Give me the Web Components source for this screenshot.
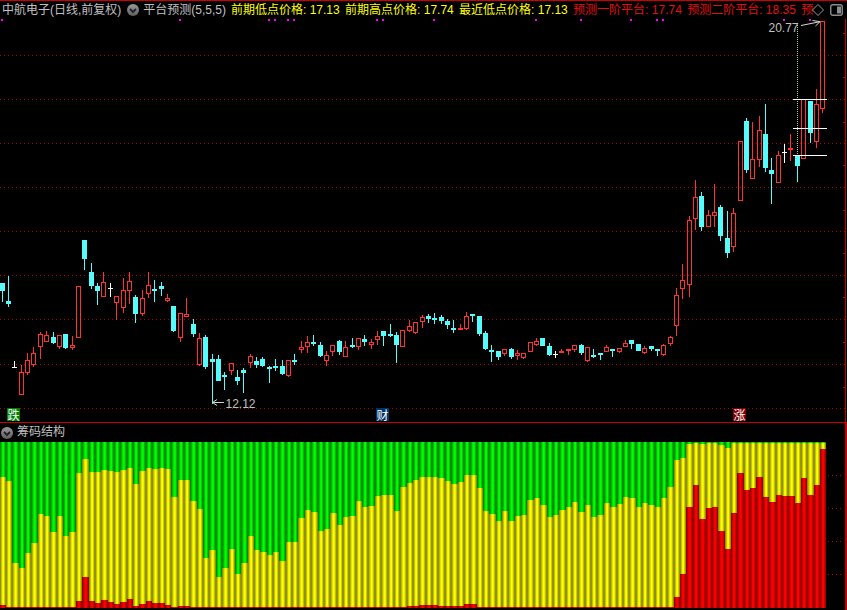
<!DOCTYPE html>
<html lang="zh">
<head>
<meta charset="utf-8">
<title>中航电子</title>
<style>
html,body{margin:0;padding:0;background:#000;}
</style>
</head>
<body>
<trade-terminal>
  <chart-header slot="header">
    <legend-item color="#c0c0c0">中航电子(日线,前复权)</legend-item>
    <round-chevron slot="after-title"></round-chevron>
    <legend-item color="#c0c0c0" slot="indicator">平台预测(5,5,5)</legend-item>
    <legend-item color="#ffff00" slot="values">前期低点价格: 17.13</legend-item>
    <legend-item color="#ffff00" slot="values">前期高点价格: 17.74</legend-item>
    <legend-item color="#ffff00" slot="values">最近低点价格: 17.13</legend-item>
    <legend-item color="#e01010" slot="values">预测一阶平台: 17.74</legend-item>
    <legend-item color="#e01010" slot="values">预测二阶平台: 18.35</legend-item>
    <legend-item color="#e01010" slot="values">预</legend-item>
  </chart-header>
  <candle-chart slot="main">
    <signal-badge style="left:7px;bottom:1px" bg="#008000">跌</signal-badge>
    <signal-badge style="left:376px;bottom:1px" bg="#003466">财</signal-badge>
    <signal-badge style="left:733px;bottom:1px" bg="#800000">涨</signal-badge>
  </candle-chart>
  <chip-panel slot="lower">
    <round-chevron slot="icon"></round-chevron>
    筹码结构
  </chip-panel>
</trade-terminal>

<script>
const FONT = '"Liberation Sans","Noto Sans CJK SC",sans-serif';
const cx = i => 2.19 + 6.361 * i;

class TradeTerminal extends HTMLElement {
  constructor(){
    super();
    this.attachShadow({mode:'open'}).innerHTML = `
      <style>
        :host{display:flex;flex-direction:column;width:847px;height:610px;background:#000;overflow:hidden;font:12px ${FONT};}
      </style>
      <slot name="header"></slot><slot name="main"></slot><slot name="lower"></slot>`;
  }
}
class ChartHeader extends HTMLElement {
  constructor(){
    super();
    this.attachShadow({mode:'open'}).innerHTML = `
      <style>
        :host{display:flex;align-items:center;height:18px;border-top:1px solid #d00000;padding-left:2px;white-space:nowrap;flex:none;}
        .values{display:flex;gap:5.33px;margin-left:5px;}
        .chev{display:flex;margin:0 4px 0 6px;}
        .end{display:flex;align-items:center;margin-left:-1px;}
        .end svg{display:block;flex:none;}
        .toggle{margin-left:6px;}
      </style>
      <slot></slot>
      <span class="chev"><slot name="after-title"></slot></span>
      <slot name="indicator"></slot>
      <span class="values"><slot name="values"></slot></span>
      <span class="end">
        <svg width="12" height="12" viewBox="0 0 12 12"><path d="M6 .5 11.5 6 6 11.5 .5 6Z" fill="none" stroke="#9a9a9a"/></svg>
        <svg class="toggle" width="13" height="12" viewBox="0 0 13 12"><rect x=".75" y=".75" width="11.5" height="10.5" rx="2" fill="none" stroke="#8c8c8c" stroke-width="1.4"/><rect x="7" y="2.5" width="4" height="7" fill="#8c8c8c"/></svg>
      </span>`;
  }
}
class LegendItem extends HTMLElement {
  constructor(){
    super();
    this.attachShadow({mode:'open'}).innerHTML = `<style>:host{display:block;font:12px/18px ${FONT};white-space:nowrap;color:var(--c,#c0c0c0);}</style><slot></slot>`;
  }
  connectedCallback(){ this.style.setProperty('--c', this.getAttribute('color')); }
}
class RoundChevron extends HTMLElement {
  constructor(){
    super();
    this.attachShadow({mode:'open'}).innerHTML = `
      <style>:host{display:block;width:12px;height:12px;flex:none;}svg{display:block;}</style>
      <svg width="12" height="12" viewBox="0 0 12 12">
        <defs><linearGradient id="g" x1="0" y1="0" x2="0" y2="1"><stop offset="0" stop-color="#9a9a9a"/><stop offset="1" stop-color="#5e5e5e"/></linearGradient></defs>
        <circle cx="6" cy="6" r="6" fill="url(#g)"/>
        <path d="M3 5 6 8 9 5" fill="none" stroke="#202020" stroke-width="1.8"/>
      </svg>`;
  }
}
class SignalBadge extends HTMLElement {
  constructor(){
    super();
    this.attachShadow({mode:'open'}).innerHTML = `<style>:host{position:absolute;display:block;width:13px;height:13px;font:12px/13px "Noto Sans CJK SC",sans-serif;color:#fff;text-align:center;background:var(--b);}</style><slot></slot>`;
  }
  connectedCallback(){ this.style.setProperty('--b', this.getAttribute('bg')); }
}

/* type, wick top, body top, body bottom, wick bottom — sampled in 3x crop units */
const SETS = [
 [230,'c,159,159,183,216 c,138,213,222,231 w,392,411,411,414 r,405,427,494,494 r,369,391,429,435 r,351,370,405,411 r,306,313,350,387 r,303,316,335,335 c,306,321,339,342 r,316,316,350,357 c,312,312,354,357 r,318,346,353,360 r,169,169,323,323 c,30,30,87,120 c,99,126,168,177 c,159,168,183,225 r,126,157,200,201 w,159,174,174,201 r,199,199,218,270 r,144,181,233,249 r,126,154,182,222 c,195,201,252,279 r,180,205,251,258 r,126,166,191,204 c,150,177,183,216 c,156,168,177,198 r,192,205,213,216 c,228,228,303,306 r,250,250,323,336 r,204,253,260,260 c,267,282,312,321 r,309,325,404,408 c,315,321,411,417 c,372,387,396,522 c,375,387,453,453 c,426,434,437,480 r,400,400,422,435 c,420,441,453,465 c,414,420,429,489 r,372,379,398,414 c,381,393,405,414 c,381,388,408,411 c,408,411,414,459 c,387,408,411,423'],
 [300,'c,180,198,222,225 r,181,181,228,231 c,162,180,181,195 r,123,142,149,159 r,108,127,142,159 c,105,127,131,138 c,126,136,168,171 r,153,166,182,198 r,136,136,155,168 c,120,124,156,165 r,123,142,170,171 c,114,136,140,144 r,115,115,142,150 c,105,118,125,138 r,117,127,136,147 r,93,109,119,135 c,94,94,108,138 c,72,103,106,111 c,96,106,136,189 r,91,91,140,140 r,60,79,92,96 r,67,67,98,102 r,45,52,67,84 c,42,48,56,69 c,39,54,56,72 c,45,52,63,72 c,57,63,75,87 c,60,85,87,99 r,72,85,86,87 r,36,49,86,90 c,42,42,46,66 c,48,48,102,108 c,93,99,147,150 c,135,151,152,186 c,153,153,171,180 r,148,148,162,168 c,145,148,171,177 r,150,160,167,180 r,160,160,174,177 r,127,127,157,157 r,114,124,135,138 c,114,114,138,138 c,129,138,165,168 w,153,162,163,174'],
 [300,'r,147,153,154,160 r,147,147,149,165 r,136,136,149,156 c,132,135,160,165 r,142,142,183,186 c,147,166,171,174 c,160,160,163,180 r,136,142,155,155 c,148,148,150,171 r,145,145,155,159 r,120,130,140,140 c,121,121,132,147 c,132,132,153,153 r,138,145,159,162 c,139,139,147,153 c,148,148,151,168 r,132,136,165,168 r,108,112,131,138'],
 [10,'r,835,856,947,977 r,763,811,836,866 r,618,631,826,860 r,510,562,626,660 c,546,559,651,663 r,600,616,650,650 r,522,607,617,651 c,585,591,678,693 c,603,685,729,744 r,594,610,710,726 r,394,394,572,572 c,324,333,480,489 r,336,448,506,506 r,318,361,449,471 c,282,372,473,486 c,444,480,492,582 r,423,436,518,518 w,402,427,428,459 r,372,415,416,453 c,436,436,468,516 r,268,268,446,446 c,273,273,369,399 r,237,283,395,414 r,34,34,296,309']
];
const CANDLES = SETS.flatMap(([off,s]) => s.split(' ').map(row => {
  const p = row.split(',');
  const v = p.slice(1).map(n => Math.round(off + n/3));
  return {t:p[0], hi:v[0], top:v[1], bot:v[2], lo:v[3]};
}));

class CandleChart extends HTMLElement {
  constructor(){
    super();
    const COL = {r:'#ff3232', c:'#54fcfc', w:'#ffffff'};
    let s = '';
    for (const y of [55,99,143,187,231,275,319,364,408])
      s += `<path d="M0 ${y+.5}H845" stroke="#b00000" stroke-dasharray="1 3"/>`;
    s += `<path d="M845.5 19V422" stroke="#c00000"/>`;
    for (const y of [33,77,122,165,210,253,297,342,387])
      s += `<path d="M843 ${y+.5}H845" stroke="#c00000"/>`;
    for (const x of [2,180,269,275,288,294,377,383,434,536,581,631,657,663,784,810])
      s += `<rect x="${x-1}" y="19" width="2" height="2" fill="#ff00ff"/>`;
    s += `<path d="M797.5 23V182" stroke="#90d890" stroke-dasharray="1 1"/>`;
    CANDLES.forEach((k,i) => {
      const p = Math.floor(cx(i)), c = COL[k.t], w = p + .5;
      if (k.hi < k.top) s += `<path d="M${w} ${k.hi}V${k.top}" stroke="${c}"/>`;
      if (k.lo > k.bot) s += `<path d="M${w} ${k.bot}V${k.lo}" stroke="${c}"/>`;
      const h = Math.max(k.bot - k.top, 1);
      if (k.t === 'c') s += `<rect x="${p-2}" y="${k.top}" width="5" height="${Math.max(h,2)}" fill="${c}"/>`;
      else if (k.t === 'w') s += `<rect x="${p-2}" y="${k.top}" width="5" height="1" fill="${c}"/>`;
      else if (h <= 1) s += `<rect x="${p-2}" y="${k.top}" width="5" height="2" fill="${c}"/>`;
      else s += `<path d="M${p-2} ${k.top}h5v${h}h-5zM${p-1} ${k.top+1}v${h-2}h3v${-(h-2)}z" fill="${c}" fill-rule="evenodd"/>`;
    });
    for (const y of [99,128,155])
      s += `<path d="M793 ${y+.5}H827" stroke="#fff"/>`;
    this.attachShadow({mode:'open'}).innerHTML = `
      <style>
        :host{display:block;position:relative;flex:none;height:403px;}
        svg{display:block;}
        text{font:12px "Liberation Sans",sans-serif;fill:#c0c0c0;}
        .s{shape-rendering:crispEdges;}
      </style>
      <svg width="847" height="403" viewBox="0 19 847 403">
        <g class="s">${s}</g>
        <text x="768.5" y="32">20.77</text>
        <path d="M801 25.5 819.5 21.8M812.5 20.5 820 21.7 815.5 26" fill="none" stroke="#d8d8d8"/>
        <text x="225.5" y="408">12.12</text>
        <path d="M224 402.5H213M217 399.5 212.5 402.5 217 405.5" fill="none" stroke="#d0d0d0"/>
      </svg>
      <slot></slot>`;
  }
}

const yellowTop = [171,183,429,444,399,369,282,288,336,288,348,336,159,117,156,156,150,153,156,150,144,192,153,144,147,144,147,231,180,180,243,267,414,390,471,444,387,462,429,348,390,396,405,396,
 423,366,366,294,270,276,333,327,279,315,291,288,243,261,258,228,225,225,273,201,189,180,171,171,171,174,183,192,186,165,165,204,273,282,303,273,303,288,285,240,234,255,291,285,270,
 261,246,276,255,291,285,249,261,252,231,234,261,249,255,261,234,201,120,114,72,69,72,69,69,75,84,69,69,69,69,69,69,69,69,69,69,69,69,69,69,69].map(v=>Math.round(420+v/3));
const redTop = new Array(130).fill(607);
const RED = {0:555,12:543,13:471,14:543,15:549,16:540,17:546,18:552,19:546,20:537,21:558,22:552,23:543,24:549,25:549,26:555,28:558,29:558,
 64:558,65:558,66:555,67:555,68:555,69:558,70:558,71:558,72:558,73:552,74:552,
 106:531,107:462,108:261,109:195,110:297,111:264,112:261,113:333,114:387,115:279,116:159,117:210,118:204,119:171,120:231,121:246,122:225,123:228,124:228,125:249,126:174,127:225,128:195,129:87};
for (const k in RED) redTop[k] = Math.round(420 + RED[k]/3);

class ChipBars extends HTMLElement {
  constructor(){
    super();
    const TOP = 442, BOT = 608;
    let s = '';
    for (let i = 0; i < 130; i++) {
      const l = Math.max(0, Math.round(cx(i) + .5 - 3.18)), r = Math.round(cx(i) + .5 + 3.18), w = r - l;
      const y = yellowTop[i], d = redTop[i];
      s += `<rect x="${l}" y="${TOP}" width="${w}" height="${y-TOP}" fill="url(#gg)"/>`;
      s += `<rect x="${l}" y="${y}" width="${w}" height="${d-y}" fill="url(#gy)"/>`;
      s += `<rect x="${l}" y="${d}" width="${w}" height="${BOT-d}" fill="url(#gr)"/>`;
    }
    for (const y of [475,508,541,574]) s += `<path d="M828 ${y+.5}H842" stroke="#c00000" stroke-dasharray="1 3"/>`;
    const grad = (id,e,m) => `<linearGradient id="${id}"><stop offset="0" stop-color="${e}"/><stop offset=".45" stop-color="${m}"/><stop offset=".6" stop-color="${m}"/><stop offset="1" stop-color="${e}"/></linearGradient>`;
    this.attachShadow({mode:'open'}).innerHTML = `
      <style>:host{display:block;flex:none;height:168px;}svg{display:block;shape-rendering:crispEdges;}</style>
      <svg width="845" height="168" viewBox="0 442 845 168">
        <defs>${grad('gg','#007000','#00ff00')}${grad('gy','#787800','#ffff00')}${grad('gr','#800000','#ff0000')}</defs>
        ${s}
      </svg>`;
  }
}
class ChipPanel extends HTMLElement {
  constructor(){
    super();
    this.attachShadow({mode:'open'}).innerHTML = `
      <style>
        :host{display:flex;flex-direction:column;flex:none;height:187px;border-top:1px solid #c80000;border-right:2px solid #c00000;width:845px;}
        header{display:flex;align-items:center;gap:4px;height:19px;padding-left:1px;font:12px/19px ${FONT};color:#c0c0c0;flex:none;}
      </style>
      <header><slot name="icon"></slot><span><slot></slot></span></header>
      <chip-bars></chip-bars>`;
  }
}
customElements.define('chip-bars', ChipBars);
customElements.define('trade-terminal', TradeTerminal);
customElements.define('chart-header', ChartHeader);
customElements.define('legend-item', LegendItem);
customElements.define('round-chevron', RoundChevron);
customElements.define('signal-badge', SignalBadge);
customElements.define('candle-chart', CandleChart);
customElements.define('chip-panel', ChipPanel);
</script>
</body>
</html>
